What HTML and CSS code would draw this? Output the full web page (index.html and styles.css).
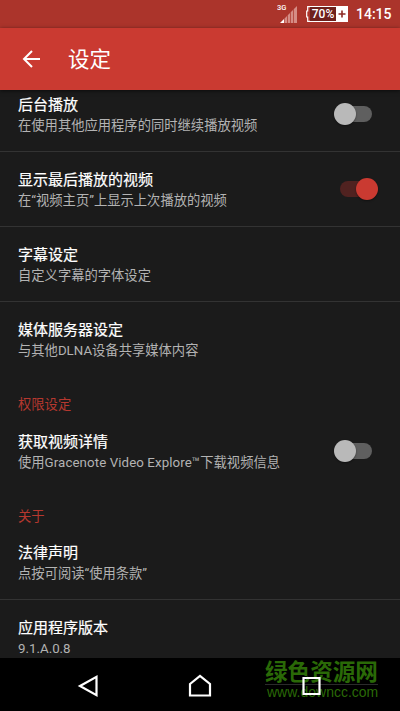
FILE: index.html
```html
<!DOCTYPE html>
<html lang="zh-CN">
<head>
<meta charset="utf-8">
<title>设定</title>
<link rel="stylesheet" href="styles.css">
</head>
<body>
<div class="screen">
  <div class="status">
    <svg class="signal" width="24" height="28" viewBox="0 0 24 28">
      <text class="net" x="0" y="9.500">3G</text>
      <path d="M3 23L7 19V23Z" fill="#fff"/>
      <path d="M7.500 18.500L10 16V23H7.500ZM10.700 15.300L13 13V23H10.700ZM13.700 12.300L16 10V23H13.700ZM16.700 9.300L20 6V23H16.700Z" fill="#e3aaa4" fill-opacity=".75"/>
    </svg>
    <div class="battery">
      <svg class="cap" width="4" height="16" viewBox="0 0 4 16"><path d="M4 .7H1.700V5H.7V11H1.700V15.300H4" fill="none" stroke="#fff" stroke-width="1.200"/></svg>
      <span class="level">70%</span>
      <svg class="plus" width="12" height="16" viewBox="0 0 12 16"><path d="M0 0H12V16H0Z" fill="#fff"/><path d="M6 4.500V11.500M2.500 8H9.500" stroke="#8c2a25" stroke-width="1.600"/></svg>
    </div>
    <span class="clock">14:15</span>
  </div>
  <header class="bar">
    <svg class="back" width="20" height="20" viewBox="0 0 20 20"><path d="M18 10H2M10 2L2 10L10 18" fill="none" stroke="#fff" stroke-width="2"/></svg>
    <h1>设定</h1>
  </header>
  <main class="list">
    <div class="row first">
      <div class="text"><div class="title">后台播放</div><div class="sub">在使用其他应用程序的同时继续播放视频</div></div>
      <div class="switch"><i class="track"></i><i class="knob"></i></div>
    </div>
    <div class="row">
      <div class="text"><div class="title">显示最后播放的视频</div><div class="sub">在“视频主页”上显示上次播放的视频</div></div>
      <div class="switch on"><i class="track"></i><i class="knob"></i></div>
    </div>
    <div class="row">
      <div class="text"><div class="title">字幕设定</div><div class="sub">自定义字幕的字体设定</div></div>
    </div>
    <div class="row last">
      <div class="text"><div class="title">媒体服务器设定</div><div class="sub">与其他DLNA设备共享媒体内容</div></div>
    </div>
    <h2>权限设定</h2>
    <div class="row last">
      <div class="text"><div class="title">获取视频详情</div><div class="sub">使用<span class="latin">Gracenote Video Explore™</span>下载视频信息</div></div>
      <div class="switch"><i class="track"></i><i class="knob"></i></div>
    </div>
    <h2>关于</h2>
    <div class="row">
      <div class="text"><div class="title">法律声明</div><div class="sub">点按可阅读“使用条款”</div></div>
    </div>
    <div class="row">
      <div class="text"><div class="title">应用程序版本</div><div class="sub">9.1.A.0.8</div></div>
    </div>
  </main>
  <nav class="nav">
    <svg width="24" height="24" viewBox="0 0 24 24"><path d="M4 12L20.500 2.800V21.200Z"/></svg>
    <svg width="24" height="24" viewBox="0 0 24 24"><path d="M2 10L12 1.800L22 10V21.500H2Z"/></svg>
    <svg width="24" height="24" viewBox="0 0 24 24"><path d="M3.500 4H19.500V20H3.500Z"/></svg>
    <div class="mark"><div class="mark-name">绿色资源网</div><div class="mark-url">www.downcc.com</div></div>
  </nav>
</div>
</body>
</html>
```
FILE: styles.css
```css
* { box-sizing: border-box; }
body { margin: 0; background: #1b1b1b; font-family: Roboto, "Noto Sans CJK SC", sans-serif; }
.screen { display: flex; flex-direction: column; width: 400px; height: 711px; overflow: hidden; }
.status { display: flex; flex: none; align-items: center; height: 28px; padding-right: 9px; justify-content: flex-end; background: #ab342b; color: #fff; }
.signal { margin-right: 5px; }
.net { font-size: 7.500px; font-weight: 500; fill: #fff; }
.battery { display: flex; height: 16px; margin-right: 8px; }
.level { width: 26px; border: solid #fff; border-width: 1px 0; background: #6f211d; font-size: 12px; font-weight: 500; line-height: 14px; text-align: center; }
.clock { width: 35px; font-size: 14px; font-weight: 500; white-space: nowrap; }
.bar { position: relative; z-index: 1; display: flex; flex: none; align-items: center; height: 62px; padding-left: 22px; background: #ca3a31; box-shadow: 0 1px 4px rgba(0,0,0,.6); }
.bar h1 { margin: 2px 0 0 26px; color: #fff; font-size: 21.500px; font-weight: 400; line-height: 30px; }
.list { flex: 1; min-height: 0; overflow: hidden; background: #1b1b1b; }
.row { display: flex; justify-content: space-between; height: 75px; padding: 18px 19px 0 18px; border-bottom: 1px solid #333; }
.first { margin-top: -13px; }
.last { border-bottom-color: transparent; }
.title { height: 21px; color: #fff; font-size: 15px; font-weight: 400; line-height: 20px; -webkit-text-stroke: .2px #fff; white-space: nowrap; }
.sub { height: 20px; color: #b3b3b3; font-size: 13.300px; line-height: 20px; white-space: nowrap; }
.latin { letter-spacing: .09px; }
.list h2 { height: 37px; margin: 0; padding: 8px 18px 0; color: #b5382f; font-size: 13.300px; font-weight: 400; line-height: 40px; }
.list h2 ~ h2 { height: 36px; }
.switch { display: flex; align-items: center; width: 47px; height: 22px; margin-top: 8px; }
.track { width: 32px; height: 16px; margin-left: 6px; border-radius: 8px; background: #5f5f5f; }
.knob { flex: none; width: 22px; height: 22px; margin-left: -38px; border-radius: 50%; background: #b9b9b9; box-shadow: 0 1px 2px rgba(0,0,0,.4); }
.on .track { background: #502220; }
.on .knob { margin-left: -16px; background: #ca3a31; }
.nav { position: relative; display: flex; flex: none; height: 53px; padding: 16px 76px 0; justify-content: space-between; background: #000; }
.nav svg { position: relative; z-index: 1; fill: none; stroke: #fff; stroke-width: 2.200; }
.mark { position: absolute; left: 265px; top: 2px; width: 113px; color: #2f7508; opacity: .9; white-space: nowrap; }
.mark-name { height: 25px; border-bottom: 1px solid #303030; font-size: 22.600px; font-weight: 700; line-height: 25px; }
.mark-url { padding-left: 2px; font: 14px/14px "Liberation Sans", sans-serif; }
```
